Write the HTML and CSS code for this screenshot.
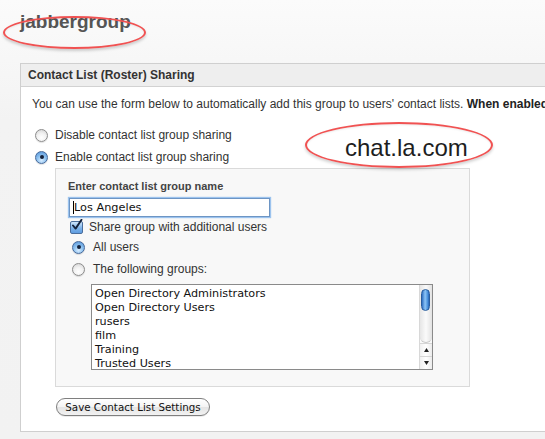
FILE: index.html
```html
<!DOCTYPE html>
<html>
<head>
<meta charset="utf-8">
<link rel="stylesheet" href="styles.css">
</head>
<body>
<div class="page">
  <h1 class="title">jabbergroup</h1>
  <section class="panel">
    <div class="panel-head">Contact List (Roster) Sharing</div>
    <div class="panel-body">
      <p class="intro">You can use the form below to automatically add this group to users' contact lists. <b>When enabled, users will see this group</b></p>
      <div class="opt"><span class="radio"></span><span>Disable contact list group sharing</span></div>
      <div class="opt"><span class="radio on"></span><span>Enable contact list group sharing</span></div>
      <div class="subbox">
        <div class="sublabel">Enter contact list group name</div>
        <div class="input"><span class="caret"></span>Los Angeles</div>
        <div class="check-row">
          <span class="checkbox"><svg width="13" height="13" viewBox="0 0 13 13"><path d="M3 6.5 L5.6 9.6 L11.5 0.8" fill="none" stroke="#15233c" stroke-width="1.9" stroke-linecap="round" stroke-linejoin="round"/></svg></span>
          <span>Share group with additional users</span>
        </div>
        <div class="opt sub"><span class="radio on"></span><span>All users</span></div>
        <div class="opt sub"><span class="radio"></span><span>The following groups:</span></div>
        <div class="listbox">
          <div class="items">
            <div>Open Directory Administrators</div>
            <div>Open Directory Users</div>
            <div>rusers</div>
            <div>film</div>
            <div>Training</div>
            <div>Trusted Users</div>
          </div>
          <div class="scrollbar">
            <div class="track"><div class="thumb"></div></div>
            <div class="arrow"><svg width="5" height="4" viewBox="0 0 5 4"><path d="M2.5 0 L5 4 L0 4 Z" fill="#222"/></svg></div>
            <div class="arrow"><svg width="5" height="4" viewBox="0 0 5 4"><path d="M0 0 L5 0 L2.5 4 Z" fill="#222"/></svg></div>
          </div>
        </div>
      </div>
      <button class="btn">Save Contact List Settings</button>
    </div>
  </section>
  <div class="mark mark-title"></div>
  <div class="mark mark-host"></div>
  <div class="host">chat.la.com</div>
</div>
</body>
</html>
```

FILE: styles.css
```css
html, body {
  margin: 0;
  padding: 0;
}
body {
  width: 545px;
  height: 439px;
  overflow: hidden;
  background: linear-gradient(#fbfbfb 0px, #f3f3f3 120px, #f2f2f2 100%);
  font-family: "Liberation Sans", Arial, sans-serif;
  color: #333;
}
.page {
  position: relative;
  padding-left: 20px;
}
.title {
  margin: 11px 0 30px 0;
  font-size: 19px;
  line-height: 22px;
  font-weight: bold;
  color: #555;
}
.panel {
  width: 720px;
  border: 1px solid #cfcfcf;
  background: #fff;
}
.panel-head {
  height: 22px;
  line-height: 22px;
  padding-left: 7px;
  font-size: 12px;
  font-weight: bold;
  color: #333;
  background: #eeeeee;
  border-bottom: 1px solid #d2d2d2;
}
.panel-body {
  padding: 9px 0 15px 11px;
}
.intro {
  margin: 0 0 12px 0;
  font-size: 12px;
  line-height: 16px;
  white-space: nowrap;
  color: #333;
}
.intro b {
  color: #222;
}
.opt {
  display: flex;
  align-items: center;
  height: 22px;
  font-size: 12px;
  color: #333;
  white-space: nowrap;
}
.opt .radio {
  margin-left: 3px;
  margin-right: 7px;
}
.radio {
  width: 11px;
  height: 11px;
  border-radius: 50%;
  border: 1px solid #8c8c8c;
  background: radial-gradient(circle at 50% 70%, #ffffff 0%, #f2f2f2 45%, #cfcfcf 100%);
  box-shadow: 0 1px 1px rgba(0,0,0,0.12);
  position: relative;
  flex: none;
}
.radio.on {
  border-color: #46699a;
  background: radial-gradient(circle at 50% 75%, #d7ecff 0%, #8ec2f0 45%, #4f8fd6 100%);
}
.radio.on::after {
  content: "";
  position: absolute;
  left: 3.5px;
  top: 3.5px;
  width: 4px;
  height: 4px;
  border-radius: 50%;
  background: #14213a;
}
.subbox {
  margin: 0 0 11px 23px;
  width: 401px;
  padding: 10px 0 16px 12px;
  background: #f8f8f8;
  border: 1px solid #dadada;
}
.sublabel {
  font-size: 11px;
  line-height: 14px;
  font-weight: bold;
  color: #444;
}
.input {
  margin: 5px 0 1px 1px;
  width: 196px;
  height: 17px;
  line-height: 17px;
  padding-left: 3px;
  border: 1px solid #6d95c4;
  box-shadow: 0 0 1px 1px #9cc3ee;
  background: #fff;
  font-family: "DejaVu Sans", sans-serif;
  font-size: 11.3px;
  color: #111;
  display: flex;
  align-items: center;
}
.caret {
  width: 1px;
  height: 13px;
  background: #000;
  margin-right: 0;
}
.check-row {
  display: flex;
  align-items: center;
  height: 18px;
  font-size: 12px;
  color: #333;
  white-space: nowrap;
}
.checkbox {
  margin-left: 2px;
  margin-right: 6px;
  width: 11px;
  height: 11px;
  border: 1px solid #4b6e9c;
  border-radius: 2px;
  background: linear-gradient(#cfe6fb, #7fb4ea 55%, #5e9ce0);
  position: relative;
  flex: none;
}
.checkbox svg {
  position: absolute;
  left: -1px;
  top: -3px;
}
.opt.sub .radio {
  margin-left: 4px;
  margin-right: 8px;
}
.listbox {
  margin: 4px 0 0 23px;
  width: 340px;
  height: 84px;
  border: 1px solid #8a8a8a;
  background: #fff;
  display: flex;
  overflow: hidden;
}
.items {
  flex: 1;
  padding: 2px 0 0 3px;
  font-family: "DejaVu Sans", sans-serif;
  font-size: 11.2px;
  line-height: 14px;
  color: #111;
  white-space: nowrap;
}
.scrollbar {
  width: 12px;
  border-left: 1px solid #d8d8d8;
  display: flex;
  flex-direction: column;
  background: #fafafa;
}
.track {
  flex: 1;
  padding: 4px 0 0 1px;
  background: linear-gradient(90deg, #e6e6e6, #fafafa 50%, #e2e2e2);
  border-bottom-left-radius: 6px;
  border-bottom-right-radius: 6px;
  border-bottom: 1px solid #c8c8c8;
}
.thumb {
  width: 9px;
  height: 22px;
  border-radius: 5px;
  border: 1px solid #2a5e9e;
  box-sizing: border-box;
  background: linear-gradient(90deg, #2f6fc2, #8cc4f6 45%, #4b92dc 80%, #2a64b4);
}
.arrow {
  height: 12px;
  display: flex;
  align-items: center;
  justify-content: center;
  border-top: 1px solid #d6d6d6;
  background: linear-gradient(90deg, #f0f0f0, #ffffff 50%, #ececec);
}
.btn {
  display: block;
  margin-left: 24px;
  width: 154px;
  height: 18px;
  padding: 0;
  border: 1px solid #7f7f7f;
  border-radius: 9px;
  background: linear-gradient(#ffffff, #f4f4f4 50%, #e4e4e4 51%, #f2f2f2);
  font-family: "DejaVu Sans", sans-serif;
  font-size: 10.3px;
  line-height: 16px;
  color: #111;
  box-shadow: 0 1px 0 rgba(0,0,0,0.08);
}
.mark {
  position: absolute;
  border: 2.5px solid #f05252;
  border-radius: 50%;
  box-shadow: 0 2px 3px rgba(0,0,0,0.18), inset 0 1px 2px rgba(0,0,0,0.08);
  pointer-events: none;
}
.mark-title {
  left: 3px;
  top: 5px;
  width: 139px;
  height: 29px;
}
.mark-host {
  left: 305px;
  top: 111px;
  width: 184px;
  height: 42px;
}
.host {
  position: absolute;
  left: 345px;
  top: 123px;
  font-family: "Liberation Sans", Arial, sans-serif;
  font-size: 24px;
  line-height: 28px;
  color: #1e1e1e;
}
```
